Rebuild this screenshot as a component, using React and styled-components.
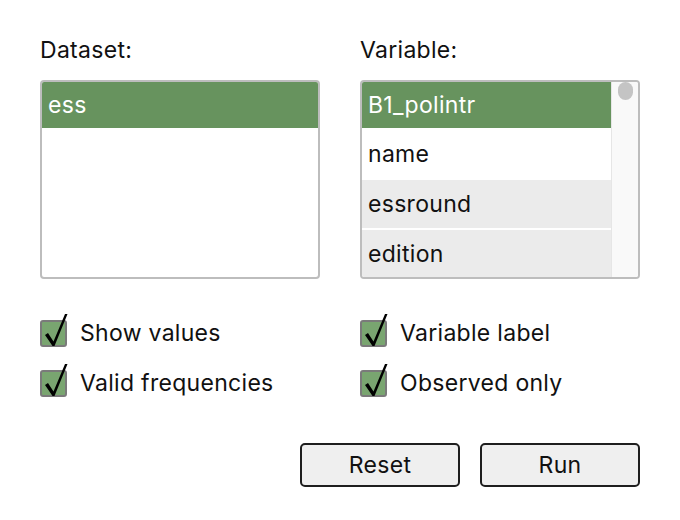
import React from "react";
import styled, { createGlobalStyle } from "styled-components";

const Global = createGlobalStyle`
  html, body { margin: 0; padding: 0; background: #fff; }
  body { font-family: Inter, "Noto Sans", sans-serif; color: #111; letter-spacing: 0.3px; }
`;

const Page = styled.div`
  width: 680px;
  height: 520px;
  box-sizing: border-box;
  padding: 36px 40px 0 40px;
  display: flex;
  flex-direction: column;
`;

const Columns = styled.div`
  display: grid;
  grid-template-columns: 280px 280px;
  column-gap: 40px;
`;

const Column = styled.div`
  display: flex;
  flex-direction: column;
`;

const Label = styled.div`
  font-size: 23px;
  line-height: 28px;
  height: 44px;
`;

const ListBox = styled.div`
  height: 199px;
  box-sizing: border-box;
  border: 2px solid #bdbdbd;
  border-radius: 4px;
  overflow: hidden;
  display: flex;
`;

const Rows = styled.div`
  flex: 1;
  display: flex;
  flex-direction: column;
  margin-top: -2px;
`;

const Row = styled.div`
  height: 48px;
  flex: none;
  border-bottom: 2px solid #fff;
  padding: 0 6px;
  display: flex;
  align-items: center;
  font-size: 23px;
  background: ${(p) => (p.$selected ? "#67935e" : p.$alt ? "#ebebeb" : "#fff")};
  color: ${(p) => (p.$selected ? "#fff" : "#111")};
  &:first-child {
    height: 46px;
    padding-top: 2px;
  }
`;

const ScrollTrack = styled.div`
  width: 26px;
  flex: none;
  background: #f9f9f9;
  border-left: 1px solid #e6e6e6;
  display: flex;
  justify-content: center;
`;

const Thumb = styled.div`
  width: 15px;
  height: 18px;
  background: #c4c4c4;
  border-radius: 8px;
`;

const Checks = styled.div`
  margin-top: 41px;
  display: flex;
  flex-direction: column;
  gap: 24px;
`;

const CheckRow = styled.label`
  display: flex;
  align-items: center;
  gap: 13px;
  font-size: 23px;
  height: 26px;
`;

const Box = styled.span`
  position: relative;
  width: 27px;
  height: 27px;
  box-sizing: border-box;
  border: 2px solid #7a7a7a;
  border-radius: 3px;
  background: #79a570;
  flex: none;
`;

const Mark = styled.svg`
  position: absolute;
  left: 0;
  top: -9px;
  overflow: visible;
`;

const Buttons = styled.div`
  margin-top: 47px;
  display: flex;
  justify-content: flex-end;
  gap: 20px;
`;

const Button = styled.button`
  width: 160px;
  height: 44px;
  box-sizing: border-box;
  border: 2px solid #1e1e1e;
  border-radius: 5px;
  background: #efefef;
  font-family: Inter, "Noto Sans", sans-serif;
  font-size: 23px;
  letter-spacing: 0.3px;
  color: #111;
  padding: 0;
`;

function Check({ label }) {
  return (
    <CheckRow>
      <Box>
        <Mark width="26" height="34" viewBox="0 0 26 34">
          <path
            d="M3 22 L6 20 L11.5 28.5 L23 1 L25.5 1 L12.5 33 L10.5 33 Z"
            fill="#000"
          />
        </Mark>
      </Box>
      {label}
    </CheckRow>
  );
}

export default function App() {
  return (
    <>
      <Global />
      <Page>
        <Columns>
          <Column>
            <Label>Dataset:</Label>
            <ListBox>
              <Rows>
                <Row $selected>ess</Row>
              </Rows>
            </ListBox>
            <Checks>
              <Check label="Show values" />
              <Check label="Valid frequencies" />
            </Checks>
          </Column>
          <Column>
            <Label>Variable:</Label>
            <ListBox>
              <Rows>
                <Row $selected>B1_polintr</Row>
                <Row>name</Row>
                <Row $alt>essround</Row>
                <Row $alt>edition</Row>
              </Rows>
              <ScrollTrack>
                <Thumb />
              </ScrollTrack>
            </ListBox>
            <Checks>
              <Check label="Variable label" />
              <Check label="Observed only" />
            </Checks>
          </Column>
        </Columns>
        <Buttons>
          <Button>Reset</Button>
          <Button>Run</Button>
        </Buttons>
      </Page>
    </>
  );
}
